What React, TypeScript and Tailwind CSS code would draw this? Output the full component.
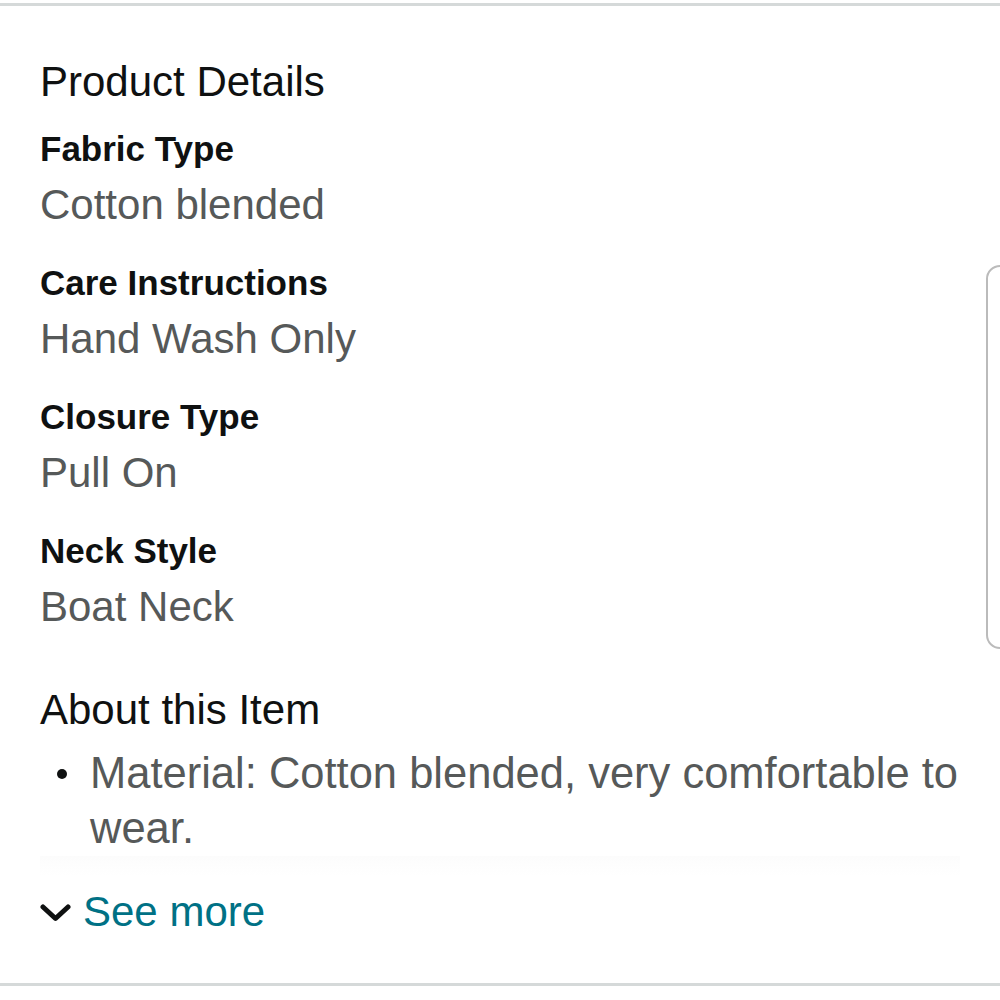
const details = [
  { label: 'Fabric Type', value: 'Cotton blended' },
  { label: 'Care Instructions', value: 'Hand Wash Only' },
  { label: 'Closure Type', value: 'Pull On' },
  { label: 'Neck Style', value: 'Boat Neck' },
];

export default function App() {
  return (
    <div className="relative w-[1000px] h-[1000px] overflow-hidden bg-white font-['Liberation_Sans',Arial,sans-serif]">
      <div className="h-[3px] mt-[3px] bg-[#d5d9d9]" />

      <div className="px-10 pt-[48px] h-[977px] flex flex-col">
        {/* Product details */}
        <h2 className="text-[42px] leading-[56px] text-[#0f1111]">Product Details</h2>
        <div className="mt-[11px] flex flex-col gap-[22px]">
          {details.map((d) => (
            <div key={d.label} className="flex flex-col">
              <p className="text-[35px] leading-[56px] font-bold text-[#0f1111]">{d.label}</p>
              <p className="text-[42px] leading-[56px] text-[#565959]">{d.value}</p>
            </div>
          ))}
        </div>

        {/* About */}
        <h2 className="mt-[47px] text-[42px] leading-[56px] text-[#0f1111]">About this Item</h2>
        <ul className="relative mt-[8px]">
          <li className="flex text-[43.5px] leading-[55px] text-[#565959]">
            <span className="w-[50px] shrink-0 flex justify-center pt-[23px]">
              <span className="block w-[10px] h-[10px] rounded-full bg-[#0f1111] ml-[-6px]" />
            </span>
            <span>Material: Cotton blended, very comfortable to wear.</span>
          </li>
          <div className="h-[20px] bg-gradient-to-b from-[#f7f7f7]/40 to-white" />
        </ul>

        <button className="mt-[8px] flex items-center gap-[12px] text-[42px] leading-[56px] text-[#007185]">
          <svg width="31" height="20" viewBox="0 0 31 20" className="mt-[2px]">
            <polyline points="3,4 15.5,15.5 28,4" fill="none" stroke="#0f1111" strokeWidth="5" strokeLinecap="round" strokeLinejoin="round" />
          </svg>
          See more
        </button>
      </div>

      <div className="h-[3px] bg-[#d5d9d9]" />

      <div className="absolute left-[986px] top-[265px] w-[40px] h-[384px] border-2 border-[#bbbbbb] rounded-[14px]" />
    </div>
  );
}
